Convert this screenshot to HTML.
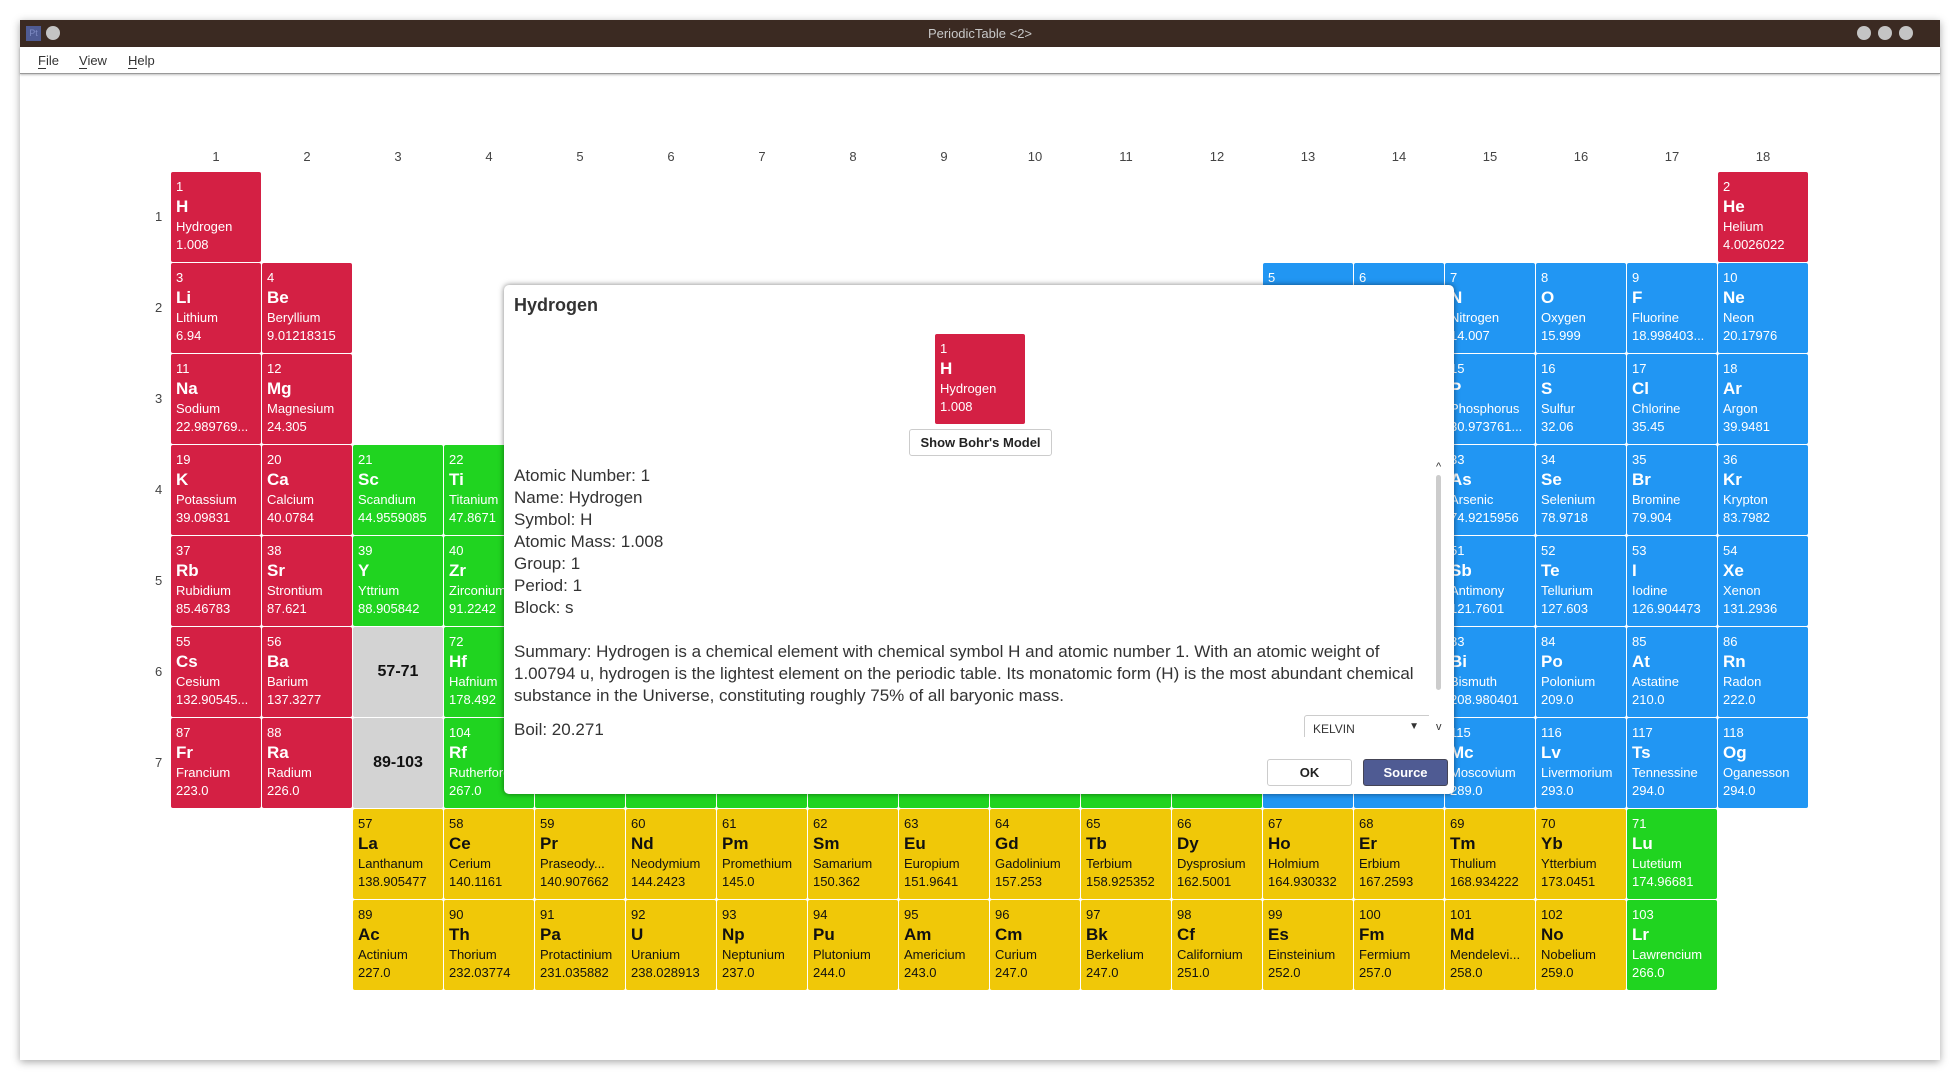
<!DOCTYPE html>
<html><head><meta charset="utf-8"><style>
*{margin:0;padding:0;box-sizing:border-box}
body{width:1960px;height:1080px;background:#fff;font-family:"Liberation Sans","DejaVu Sans",sans-serif;position:relative;overflow:hidden}
#win{position:absolute;left:20px;top:20px;width:1920px;height:1040px;background:#fff;box-shadow:0 2px 8px rgba(0,0,0,.35)}
#tb{position:absolute;left:20px;top:20px;width:1920px;height:27px;background:#3b2a22}
#tb .t{position:absolute;left:0;width:100%;top:6px;text-align:center;color:#c8c8c8;font-size:13px}
.dot{position:absolute;width:14px;height:14px;border-radius:50%;background:#c4c4c4;top:6px}
#mb{position:absolute;left:20px;top:47px;width:1920px;height:27px;background:#fff;border-bottom:1px solid #999;box-shadow:0 1px 2px rgba(0,0,0,.25)}
#mb span{position:absolute;top:6px;font-size:13px;color:#333}
#mb u{text-decoration:none;border-bottom:1px solid #333}
.h{position:absolute;font-size:13px;color:#444;width:90px;text-align:center}
.p{position:absolute;font-size:13px;color:#444;left:155px}
.c{position:absolute;width:90px;height:90px;border-radius:2px;color:#fff;overflow:hidden;white-space:nowrap}
.c i,.c b,.c s,.c em{position:absolute;left:5px;font-style:normal;text-decoration:none}
.c i{top:7px;font-size:13px}
.c b{top:25px;font-size:17px}
.c s{top:47px;font-size:13px}
.c em{top:65px;font-size:13px}
.r{background:#d42044}.bl{background:#2196f3}.g{background:#20d420}.y{background:#f0c808;color:#111}
.gr{background:#d3d3d3;color:#111;font-weight:bold;font-size:16px;text-align:center;line-height:90px}
#dlg{position:absolute;left:504px;top:285px;width:950px;height:509px;background:#fff;border-radius:5px;box-shadow:0 0 6px rgba(0,0,0,.5)}
#dlg .tt{position:absolute;left:10px;top:10px;font-weight:bold;font-size:18px;color:#333}
.ln{position:absolute;left:10px;font-size:17px;color:#333;white-space:nowrap}
.btn{position:absolute;border:1px solid #ccc;border-radius:3px;background:#fff;font-weight:bold;font-size:13px;text-align:center;color:#222}
</style></head><body>
<div id="win"></div>
<div id="tb"><div style="position:absolute;left:6px;top:6px;width:15px;height:15px;background:#4f5b93;color:#7f8bc3;font-size:9px;line-height:15px;text-align:center">Pt</div><div class="dot" style="left:26px"></div><div class="t">PeriodicTable &lt;2&gt;</div><div class="dot" style="left:1837px"></div><div class="dot" style="left:1858px"></div><div class="dot" style="left:1879px"></div></div>
<div id="mb"><span style="left:18px"><u>F</u>ile</span><span style="left:59px"><u>V</u>iew</span><span style="left:108px"><u>H</u>elp</span></div>

<div class="h" style="left:171px;top:149px">1</div><div class="h" style="left:262px;top:149px">2</div><div class="h" style="left:353px;top:149px">3</div><div class="h" style="left:444px;top:149px">4</div><div class="h" style="left:535px;top:149px">5</div><div class="h" style="left:626px;top:149px">6</div><div class="h" style="left:717px;top:149px">7</div><div class="h" style="left:808px;top:149px">8</div><div class="h" style="left:899px;top:149px">9</div><div class="h" style="left:990px;top:149px">10</div><div class="h" style="left:1081px;top:149px">11</div><div class="h" style="left:1172px;top:149px">12</div><div class="h" style="left:1263px;top:149px">13</div><div class="h" style="left:1354px;top:149px">14</div><div class="h" style="left:1445px;top:149px">15</div><div class="h" style="left:1536px;top:149px">16</div><div class="h" style="left:1627px;top:149px">17</div><div class="h" style="left:1718px;top:149px">18</div>
<div class="p" style="top:209px">1</div><div class="p" style="top:300px">2</div><div class="p" style="top:391px">3</div><div class="p" style="top:482px">4</div><div class="p" style="top:573px">5</div><div class="p" style="top:664px">6</div><div class="p" style="top:755px">7</div>

<div class="c r" style="left:171px;top:172px"><i>1</i><b>H</b><s>Hydrogen</s><em>1.008</em></div>
<div class="c r" style="left:1718px;top:172px"><i>2</i><b>He</b><s>Helium</s><em>4.0026022</em></div>
<div class="c r" style="left:171px;top:263px"><i>3</i><b>Li</b><s>Lithium</s><em>6.94</em></div>
<div class="c r" style="left:262px;top:263px"><i>4</i><b>Be</b><s>Beryllium</s><em>9.01218315</em></div>
<div class="c bl" style="left:1263px;top:263px"><i>5</i><b>B</b><s>Boron</s><em>10.81</em></div>
<div class="c bl" style="left:1354px;top:263px"><i>6</i><b>C</b><s>Carbon</s><em>12.011</em></div>
<div class="c bl" style="left:1445px;top:263px"><i>7</i><b>N</b><s>Nitrogen</s><em>14.007</em></div>
<div class="c bl" style="left:1536px;top:263px"><i>8</i><b>O</b><s>Oxygen</s><em>15.999</em></div>
<div class="c bl" style="left:1627px;top:263px"><i>9</i><b>F</b><s>Fluorine</s><em>18.998403...</em></div>
<div class="c bl" style="left:1718px;top:263px"><i>10</i><b>Ne</b><s>Neon</s><em>20.17976</em></div>
<div class="c r" style="left:171px;top:354px"><i>11</i><b>Na</b><s>Sodium</s><em>22.989769...</em></div>
<div class="c r" style="left:262px;top:354px"><i>12</i><b>Mg</b><s>Magnesium</s><em>24.305</em></div>
<div class="c bl" style="left:1263px;top:354px"><i>13</i><b>Al</b><s>Aluminium</s><em>26.9815385</em></div>
<div class="c bl" style="left:1354px;top:354px"><i>14</i><b>Si</b><s>Silicon</s><em>28.085</em></div>
<div class="c bl" style="left:1445px;top:354px"><i>15</i><b>P</b><s>Phosphorus</s><em>30.973761...</em></div>
<div class="c bl" style="left:1536px;top:354px"><i>16</i><b>S</b><s>Sulfur</s><em>32.06</em></div>
<div class="c bl" style="left:1627px;top:354px"><i>17</i><b>Cl</b><s>Chlorine</s><em>35.45</em></div>
<div class="c bl" style="left:1718px;top:354px"><i>18</i><b>Ar</b><s>Argon</s><em>39.9481</em></div>
<div class="c r" style="left:171px;top:445px"><i>19</i><b>K</b><s>Potassium</s><em>39.09831</em></div>
<div class="c r" style="left:262px;top:445px"><i>20</i><b>Ca</b><s>Calcium</s><em>40.0784</em></div>
<div class="c g" style="left:353px;top:445px"><i>21</i><b>Sc</b><s>Scandium</s><em>44.9559085</em></div>
<div class="c g" style="left:444px;top:445px"><i>22</i><b>Ti</b><s>Titanium</s><em>47.8671</em></div>
<div class="c g" style="left:535px;top:445px"></div><div class="c g" style="left:626px;top:445px"></div><div class="c g" style="left:717px;top:445px"></div><div class="c g" style="left:808px;top:445px"></div><div class="c g" style="left:899px;top:445px"></div><div class="c g" style="left:990px;top:445px"></div><div class="c g" style="left:1081px;top:445px"></div><div class="c g" style="left:1172px;top:445px"></div>
<div class="c bl" style="left:1263px;top:445px"></div><div class="c bl" style="left:1354px;top:445px"></div>
<div class="c bl" style="left:1445px;top:445px"><i>33</i><b>As</b><s>Arsenic</s><em>74.9215956</em></div>
<div class="c bl" style="left:1536px;top:445px"><i>34</i><b>Se</b><s>Selenium</s><em>78.9718</em></div>
<div class="c bl" style="left:1627px;top:445px"><i>35</i><b>Br</b><s>Bromine</s><em>79.904</em></div>
<div class="c bl" style="left:1718px;top:445px"><i>36</i><b>Kr</b><s>Krypton</s><em>83.7982</em></div>
<div class="c r" style="left:171px;top:536px"><i>37</i><b>Rb</b><s>Rubidium</s><em>85.46783</em></div>
<div class="c r" style="left:262px;top:536px"><i>38</i><b>Sr</b><s>Strontium</s><em>87.621</em></div>
<div class="c g" style="left:353px;top:536px"><i>39</i><b>Y</b><s>Yttrium</s><em>88.905842</em></div>
<div class="c g" style="left:444px;top:536px"><i>40</i><b>Zr</b><s>Zirconium</s><em>91.2242</em></div>
<div class="c g" style="left:535px;top:536px"></div><div class="c g" style="left:626px;top:536px"></div><div class="c g" style="left:717px;top:536px"></div><div class="c g" style="left:808px;top:536px"></div><div class="c g" style="left:899px;top:536px"></div><div class="c g" style="left:990px;top:536px"></div><div class="c g" style="left:1081px;top:536px"></div><div class="c g" style="left:1172px;top:536px"></div>
<div class="c bl" style="left:1263px;top:536px"></div><div class="c bl" style="left:1354px;top:536px"></div>
<div class="c bl" style="left:1445px;top:536px"><i>51</i><b>Sb</b><s>Antimony</s><em>121.7601</em></div>
<div class="c bl" style="left:1536px;top:536px"><i>52</i><b>Te</b><s>Tellurium</s><em>127.603</em></div>
<div class="c bl" style="left:1627px;top:536px"><i>53</i><b>I</b><s>Iodine</s><em>126.904473</em></div>
<div class="c bl" style="left:1718px;top:536px"><i>54</i><b>Xe</b><s>Xenon</s><em>131.2936</em></div>
<div class="c r" style="left:171px;top:627px"><i>55</i><b>Cs</b><s>Cesium</s><em>132.90545...</em></div>
<div class="c r" style="left:262px;top:627px"><i>56</i><b>Ba</b><s>Barium</s><em>137.3277</em></div>
<div class="c gr" style="left:353px;top:627px">57-71</div>
<div class="c g" style="left:444px;top:627px"><i>72</i><b>Hf</b><s>Hafnium</s><em>178.492</em></div>
<div class="c g" style="left:535px;top:627px"></div><div class="c g" style="left:626px;top:627px"></div><div class="c g" style="left:717px;top:627px"></div><div class="c g" style="left:808px;top:627px"></div><div class="c g" style="left:899px;top:627px"></div><div class="c g" style="left:990px;top:627px"></div><div class="c g" style="left:1081px;top:627px"></div><div class="c g" style="left:1172px;top:627px"></div>
<div class="c bl" style="left:1263px;top:627px"></div><div class="c bl" style="left:1354px;top:627px"></div>
<div class="c bl" style="left:1445px;top:627px"><i>83</i><b>Bi</b><s>Bismuth</s><em>208.980401</em></div>
<div class="c bl" style="left:1536px;top:627px"><i>84</i><b>Po</b><s>Polonium</s><em>209.0</em></div>
<div class="c bl" style="left:1627px;top:627px"><i>85</i><b>At</b><s>Astatine</s><em>210.0</em></div>
<div class="c bl" style="left:1718px;top:627px"><i>86</i><b>Rn</b><s>Radon</s><em>222.0</em></div>
<div class="c r" style="left:171px;top:718px"><i>87</i><b>Fr</b><s>Francium</s><em>223.0</em></div>
<div class="c r" style="left:262px;top:718px"><i>88</i><b>Ra</b><s>Radium</s><em>226.0</em></div>
<div class="c gr" style="left:353px;top:718px">89-103</div>
<div class="c g" style="left:444px;top:718px"><i>104</i><b>Rf</b><s>Rutherfordium</s><em>267.0</em></div>
<div class="c g" style="left:535px;top:718px"></div><div class="c g" style="left:626px;top:718px"></div><div class="c g" style="left:717px;top:718px"></div><div class="c g" style="left:808px;top:718px"></div><div class="c g" style="left:899px;top:718px"></div><div class="c g" style="left:990px;top:718px"></div><div class="c g" style="left:1081px;top:718px"></div><div class="c g" style="left:1172px;top:718px"></div>
<div class="c bl" style="left:1263px;top:718px"></div><div class="c bl" style="left:1354px;top:718px"></div>
<div class="c bl" style="left:1445px;top:718px"><i>115</i><b>Mc</b><s>Moscovium</s><em>289.0</em></div>
<div class="c bl" style="left:1536px;top:718px"><i>116</i><b>Lv</b><s>Livermorium</s><em>293.0</em></div>
<div class="c bl" style="left:1627px;top:718px"><i>117</i><b>Ts</b><s>Tennessine</s><em>294.0</em></div>
<div class="c bl" style="left:1718px;top:718px"><i>118</i><b>Og</b><s>Oganesson</s><em>294.0</em></div>

<div class="c y" style="left:353px;top:809px"><i>57</i><b>La</b><s>Lanthanum</s><em>138.905477</em></div>
<div class="c y" style="left:444px;top:809px"><i>58</i><b>Ce</b><s>Cerium</s><em>140.1161</em></div>
<div class="c y" style="left:535px;top:809px"><i>59</i><b>Pr</b><s>Praseody...</s><em>140.907662</em></div>
<div class="c y" style="left:626px;top:809px"><i>60</i><b>Nd</b><s>Neodymium</s><em>144.2423</em></div>
<div class="c y" style="left:717px;top:809px"><i>61</i><b>Pm</b><s>Promethium</s><em>145.0</em></div>
<div class="c y" style="left:808px;top:809px"><i>62</i><b>Sm</b><s>Samarium</s><em>150.362</em></div>
<div class="c y" style="left:899px;top:809px"><i>63</i><b>Eu</b><s>Europium</s><em>151.9641</em></div>
<div class="c y" style="left:990px;top:809px"><i>64</i><b>Gd</b><s>Gadolinium</s><em>157.253</em></div>
<div class="c y" style="left:1081px;top:809px"><i>65</i><b>Tb</b><s>Terbium</s><em>158.925352</em></div>
<div class="c y" style="left:1172px;top:809px"><i>66</i><b>Dy</b><s>Dysprosium</s><em>162.5001</em></div>
<div class="c y" style="left:1263px;top:809px"><i>67</i><b>Ho</b><s>Holmium</s><em>164.930332</em></div>
<div class="c y" style="left:1354px;top:809px"><i>68</i><b>Er</b><s>Erbium</s><em>167.2593</em></div>
<div class="c y" style="left:1445px;top:809px"><i>69</i><b>Tm</b><s>Thulium</s><em>168.934222</em></div>
<div class="c y" style="left:1536px;top:809px"><i>70</i><b>Yb</b><s>Ytterbium</s><em>173.0451</em></div>
<div class="c g" style="left:1627px;top:809px"><i>71</i><b>Lu</b><s>Lutetium</s><em>174.96681</em></div>
<div class="c y" style="left:353px;top:900px"><i>89</i><b>Ac</b><s>Actinium</s><em>227.0</em></div>
<div class="c y" style="left:444px;top:900px"><i>90</i><b>Th</b><s>Thorium</s><em>232.03774</em></div>
<div class="c y" style="left:535px;top:900px"><i>91</i><b>Pa</b><s>Protactinium</s><em>231.035882</em></div>
<div class="c y" style="left:626px;top:900px"><i>92</i><b>U</b><s>Uranium</s><em>238.028913</em></div>
<div class="c y" style="left:717px;top:900px"><i>93</i><b>Np</b><s>Neptunium</s><em>237.0</em></div>
<div class="c y" style="left:808px;top:900px"><i>94</i><b>Pu</b><s>Plutonium</s><em>244.0</em></div>
<div class="c y" style="left:899px;top:900px"><i>95</i><b>Am</b><s>Americium</s><em>243.0</em></div>
<div class="c y" style="left:990px;top:900px"><i>96</i><b>Cm</b><s>Curium</s><em>247.0</em></div>
<div class="c y" style="left:1081px;top:900px"><i>97</i><b>Bk</b><s>Berkelium</s><em>247.0</em></div>
<div class="c y" style="left:1172px;top:900px"><i>98</i><b>Cf</b><s>Californium</s><em>251.0</em></div>
<div class="c y" style="left:1263px;top:900px"><i>99</i><b>Es</b><s>Einsteinium</s><em>252.0</em></div>
<div class="c y" style="left:1354px;top:900px"><i>100</i><b>Fm</b><s>Fermium</s><em>257.0</em></div>
<div class="c y" style="left:1445px;top:900px"><i>101</i><b>Md</b><s>Mendelevi...</s><em>258.0</em></div>
<div class="c y" style="left:1536px;top:900px"><i>102</i><b>No</b><s>Nobelium</s><em>259.0</em></div>
<div class="c g" style="left:1627px;top:900px"><i>103</i><b>Lr</b><s>Lawrencium</s><em>266.0</em></div>

<div id="dlg">
<div class="tt">Hydrogen</div>
<div class="c r" style="left:431px;top:49px"><i>1</i><b>H</b><s>Hydrogen</s><em>1.008</em></div>
<div class="btn" style="left:405px;top:144px;width:143px;height:27px;line-height:25px">Show Bohr's Model</div>
<div style="position:absolute;left:0;top:180px;width:925px;height:272px;overflow:hidden">
<div class="ln" style="top:1px">Atomic Number: 1</div>
<div class="ln" style="top:23px">Name: Hydrogen</div>
<div class="ln" style="top:45px">Symbol: H</div>
<div class="ln" style="top:67px">Atomic Mass: 1.008</div>
<div class="ln" style="top:89px">Group: 1</div>
<div class="ln" style="top:111px">Period: 1</div>
<div class="ln" style="top:133px">Block: s</div>
<div class="ln" style="top:177px">Summary: Hydrogen is a chemical element with chemical symbol H and atomic number 1. With an atomic weight of</div>
<div class="ln" style="top:199px">1.00794 u, hydrogen is the lightest element on the periodic table. Its monatomic form (H) is the most abundant chemical</div>
<div class="ln" style="top:221px">substance in the Universe, constituting roughly 75% of all baryonic mass.</div>
<div class="ln" style="top:255px">Boil: 20.271</div>
<div style="position:absolute;left:800px;top:250px;width:128px;height:30px;border:1px solid #ccc;border-radius:3px;font-size:12px;color:#333;padding:6px 8px">KELVIN<span style="position:absolute;right:12px;top:5px;font-size:10px">▼</span></div>
</div>
<div style="position:absolute;left:932px;top:176px;font-size:11px;color:#333">^</div>
<div style="position:absolute;left:932px;top:190px;width:5px;height:215px;background:#ccc;border-radius:3px"></div>
<div style="position:absolute;left:932px;top:436px;font-size:11px;color:#333">v</div>
<div class="btn" style="left:763px;top:474px;width:85px;height:27px;line-height:25px">OK</div>
<div class="btn" style="left:859px;top:474px;width:85px;height:27px;line-height:25px;background:#4f5b93;color:#fff;border-color:#445">Source</div>
</div>
</body></html>
